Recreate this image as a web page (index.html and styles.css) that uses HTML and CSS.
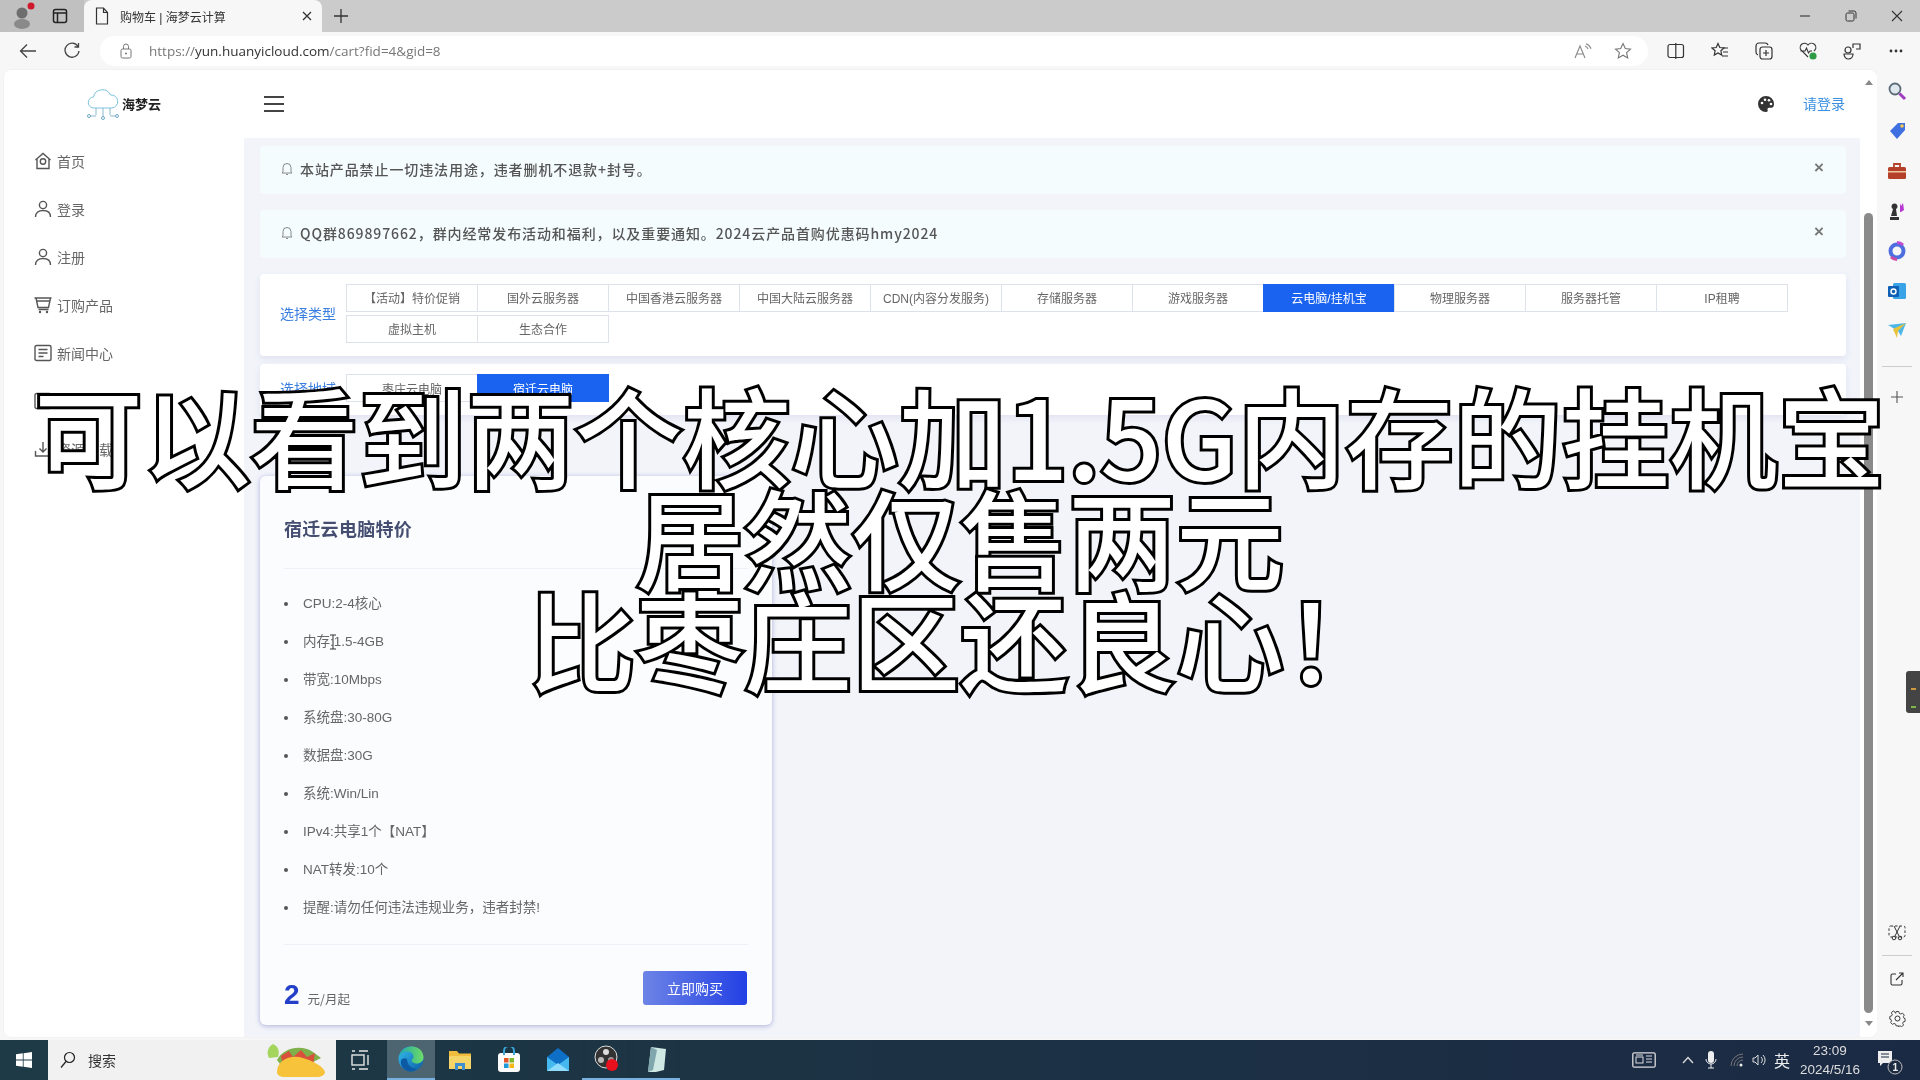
FILE: index.html
```html
<!DOCTYPE html>
<html lang="zh-CN">
<head>
<meta charset="utf-8">
<title>购物车 | 海梦云计算</title>
<link rel="stylesheet" href="styles.css">
</head>
<body>
<div class="screen">
  <div class="tabstrip">
    <div class="profile">
      <svg width="24" height="28" viewBox="0 0 24 28"><circle cx="10" cy="11" r="5.500" fill="#6e6e6e"/><ellipse cx="10" cy="22" rx="8" ry="5" fill="#8a8a8a"/><circle cx="19" cy="4" r="3.500" fill="#d0182c"/></svg>
    </div>
    <div class="tabactions">
      <svg class="ic" width="16" height="16" viewBox="0 0 16 16"><rect x="1.500" y="1.500" width="13" height="13" rx="2" stroke="#222" stroke-width="1.500"/><path d="M1.500 5h13M5.500 5v9" stroke="#222" stroke-width="1.500"/></svg>
    </div>
    <div class="tab">
      <svg class="ic" width="14" height="18" viewBox="0 0 14 18"><path d="M1.500 1h7l4 4.500V17h-11zM8.500 1v4.500h4" stroke="#333" stroke-width="1.200"/></svg>
      <span class="tabtitle">购物车 | 海梦云计算</span>
      <svg class="ic tabclose" width="10" height="10" viewBox="0 0 10 10"><path d="M1 1l8 8M9 1L1 9" stroke="#333" stroke-width="1.300"/></svg>
    </div>
    <svg class="ic newtab" width="16" height="16" viewBox="0 0 16 16"><path d="M8 1v14M1 8h14" stroke="#333" stroke-width="1.300"/></svg>
    <div class="winctl">
      <svg class="ic" width="12" height="12" viewBox="0 0 12 12"><path d="M1 6h10" stroke="#333" stroke-width="1.100"/></svg>
      <svg class="ic" width="12" height="12" viewBox="0 0 12 12"><rect x="1" y="3" width="8" height="8" rx="1.500" stroke="#333"/><path d="M3.500 1h5.500a2 2 0 0 1 2 2v5.500" stroke="#333"/></svg>
      <svg class="ic" width="12" height="12" viewBox="0 0 12 12"><path d="M1 1l10 10M11 1L1 11" stroke="#333" stroke-width="1.100"/></svg>
    </div>
  </div>

  <div class="toolbar">
    <div class="navbtn"><svg class="ic" width="18" height="16" viewBox="0 0 18 16"><path d="M17 8H1.500M8 1.500 1.500 8 8 14.500" stroke="#444" stroke-width="1.300"/></svg></div>
    <div class="navbtn"><svg class="ic" width="16" height="18" viewBox="0 0 16 18"><path d="M14 4.500A7 7 0 1 0 15 9M14.500 1v4h-4" stroke="#444" stroke-width="1.300"/></svg></div>
    <div class="addressbar">
      <svg class="ic lock" width="12" height="16" viewBox="0 0 12 16"><rect x="1" y="6" width="10" height="9" rx="1.500" stroke="#777"/><path d="M3.500 6V3.500a2.500 2.500 0 0 1 5 0V6" stroke="#777"/><circle cx="6" cy="10.500" r="1" fill="#777"/></svg>
      <span class="url">https://<b class="domain">yun.huanyicloud.com</b>/cart?fid=4&amp;gid=8</span>
      <svg class="ic addr-a" width="18" height="16" viewBox="0 0 18 16"><path d="M1 15 6 3l5 12M2.800 11h6.400M11 3a5 5 0 0 1 3 3M12 .8a8 8 0 0 1 5 5" stroke="#888" stroke-width="1.100"/></svg>
      <svg class="ic addr-star" width="18" height="18" viewBox="0 0 18 18"><path d="M9 1.500l2.300 5 5.200.6-3.900 3.500 1.100 5.300L9 13.200l-4.700 2.700 1.100-5.300L1.500 7.100l5.200-.6z" stroke="#777" stroke-width="1.100"/></svg>
    </div>
    <div class="tools">
      <svg class="ic" width="18" height="16" viewBox="0 0 18 16"><rect x="1" y="1.500" width="15.500" height="13" rx="2" stroke="#333" stroke-width="1.200"/><path d="M8.800 0v16" stroke="#333" stroke-width="1.200"/></svg>
      <svg class="ic" width="18" height="18" viewBox="0 0 18 18"><path d="M7 1.500 8.800 5.500l4.200.5-3.100 2.800.8 4.200L7 10.900l-3.700 2.100.8-4.200L1 6l4.200-.5z" stroke="#333" stroke-width="1.200"/><path d="M12 6h5M12 10h5M11 14h6" stroke="#333" stroke-width="1.200"/></svg>
      <svg class="ic" width="18" height="18" viewBox="0 0 18 18"><rect x="5" y="5" width="12" height="12" rx="2.500" stroke="#333" stroke-width="1.200"/><path d="M11 8v6M8 11h6M3 13a3 3 0 0 1-2-3V4a3 3 0 0 1 3-3h6a3 3 0 0 1 3 2" stroke="#333" stroke-width="1.200"/></svg>
      <svg class="ic" width="18" height="18" viewBox="0 0 18 18"><path d="M9 15 2 8a4 4 0 0 1 7-5 4 4 0 0 1 7 5l-1 1M1.500 9H6l1.500-3 2 5 1.500-2h2" stroke="#333" stroke-width="1.100"/><circle cx="14" cy="14" r="3.600" fill="#2e9b45"/></svg>
      <svg class="ic" width="18" height="18" viewBox="0 0 18 18"><circle cx="5" cy="8" r="3" stroke="#333" stroke-width="1.200"/><path d="M1 12h9c0 3-2 5-4.500 5S1 15 1 12zM10 6V2h7v5h-4" stroke="#333" stroke-width="1.200"/></svg>
      <svg class="ic" width="18" height="6" viewBox="0 0 18 6"><circle cx="4" cy="3" r="1.400" fill="#333"/><circle cx="9" cy="3" r="1.400" fill="#333"/><circle cx="14" cy="3" r="1.400" fill="#333"/></svg>
    </div>
  </div>

  <div class="viewport">
    <div class="page">
      <aside class="sidebar">
        <div class="logo">
          <svg class="ic" width="34" height="34" viewBox="0 0 34 34"><path d="M8 21a5.500 5.500 0 0 1-.5-11A9 9 0 0 1 24.500 8 6.500 6.500 0 0 1 26 21z" stroke="#7ec3dc" stroke-width="1"/><path d="M10 21v7M17 21v9M24 21v7M4 29h6M24 29h6" stroke="#6fa8c0" stroke-width=".8"/><circle cx="3" cy="29" r="1.500" stroke="#6fa8c0"/><circle cx="17" cy="31" r="1.500" stroke="#6fa8c0"/><circle cx="31" cy="29" r="1.500" stroke="#6fa8c0"/></svg>
          <span class="logotext">海梦云</span>
        </div>
        <nav class="menu">
          <a class="menuitem"><svg class="ic" width="18" height="18" viewBox="0 0 18 18"><path d="M1.500 8 9 1.500 16.500 8M3 6.500V16.500h12V6.500" stroke="#555" stroke-width="1.400"/><circle cx="9" cy="9.500" r="2.700" stroke="#555" stroke-width="1.400"/></svg>首页</a>
          <a class="menuitem"><svg class="ic" width="18" height="18" viewBox="0 0 18 18"><circle cx="9" cy="5" r="3.600" stroke="#555" stroke-width="1.400"/><path d="M1.500 17c0-4.500 3.200-6.500 7.500-6.500s7.500 2 7.500 6.500" stroke="#555" stroke-width="1.400"/></svg>登录</a>
          <a class="menuitem"><svg class="ic" width="18" height="18" viewBox="0 0 18 18"><circle cx="9" cy="5" r="3.600" stroke="#555" stroke-width="1.400"/><path d="M1.500 17c0-4.500 3.200-6.500 7.500-6.500s7.500 2 7.500 6.500" stroke="#555" stroke-width="1.400"/></svg>注册</a>
          <a class="menuitem"><svg class="ic" width="18" height="18" viewBox="0 0 18 18"><path d="M.5 2h17M2 2l2 9.500h10.500L16.500 2M3 5h12.500M4.500 13.500h10" stroke="#555" stroke-width="1.400"/><circle cx="6" cy="16" r="1.200" fill="#555"/><circle cx="13" cy="16" r="1.200" fill="#555"/></svg>订购产品</a>
          <a class="menuitem"><svg class="ic" width="18" height="18" viewBox="0 0 18 18"><rect x="1" y="1.500" width="16" height="15" rx="1.500" stroke="#555" stroke-width="1.400"/><path d="M4.500 5.500h9M4.500 9h9M4.500 12.500h5" stroke="#555" stroke-width="1.400"/></svg>新闻中心</a>
          <a class="menuitem"><svg class="ic" width="18" height="18" viewBox="0 0 18 18"><rect x="1" y="1.500" width="16" height="15" rx="1.500" stroke="#555" stroke-width="1.400"/></svg>帮助中心</a>
          <a class="menuitem"><svg class="ic" width="18" height="18" viewBox="0 0 18 18"><path d="M1.500 11v5h15v-5M9 2v10M5.500 8.500 9 12l3.500-3.500" stroke="#555" stroke-width="1.400"/></svg>资源下载</a>
        </nav>
      </aside>
      <div class="mainwrap">
        <header class="topbar">
          <svg class="ic burger" width="20" height="16" viewBox="0 0 20 16"><path d="M0 1h20M0 8h20M0 15h20" stroke="#444" stroke-width="2"/></svg>
          <svg class="palette" width="16" height="16" viewBox="0 0 16 16"><path d="M8 0a8 8 0 0 0 0 16c1.500 0 2-1 1.600-2-.5-1.100.2-2.200 1.400-2.200h2.500C15 11.800 16 10 16 8a8 8 0 0 0-8-8z" fill="#333"/><circle cx="4" cy="7" r="1.300" fill="#fff"/><circle cx="7" cy="3.800" r="1.300" fill="#fff"/><circle cx="11" cy="4.300" r="1.300" fill="#fff"/><circle cx="13" cy="8" r="1.300" fill="#fff"/></svg>
          <span class="loginlink">请登录</span>
        </header>
        <main class="content">
          <div class="alert">
            <svg class="ic bell" width="12" height="14" viewBox="0 0 12 14"><path d="M2 10V5.500a4 4 0 0 1 8 0V10l1 1H1zM5 12.500h2" stroke="#888" stroke-width="1"/></svg>
            <span class="alerttext">本站产品禁止一切违法用途，违者删机不退款+封号。</span>
            <span class="alertclose">×</span>
          </div>
          <div class="alert">
            <svg class="ic bell" width="12" height="14" viewBox="0 0 12 14"><path d="M2 10V5.500a4 4 0 0 1 8 0V10l1 1H1zM5 12.500h2" stroke="#888" stroke-width="1"/></svg>
            <span class="alerttext">QQ群869897662，群内经常发布活动和福利，以及重要通知。2024云产品首购优惠码hmy2024</span>
            <span class="alertclose">×</span>
          </div>
          <section class="filter filter-type">
            <span class="filterlabel">选择类型</span>
            <div class="tabgrid">
              <span class="opt">【活动】特价促销</span>
              <span class="opt">国外云服务器</span>
              <span class="opt">中国香港云服务器</span>
              <span class="opt">中国大陆云服务器</span>
              <span class="opt">CDN(内容分发服务)</span>
              <span class="opt">存储服务器</span>
              <span class="opt">游戏服务器</span>
              <span class="opt active">云电脑/挂机宝</span>
              <span class="opt">物理服务器</span>
              <span class="opt">服务器托管</span>
              <span class="opt">IP租聘</span>
              <span class="opt">虚拟主机</span>
              <span class="opt">生态合作</span>
            </div>
          </section>
          <section class="filter filter-region">
            <span class="filterlabel">选择地域</span>
            <div class="tabgrid">
              <span class="opt">枣庄云电脑</span>
              <span class="opt active">宿迁云电脑</span>
            </div>
          </section>
          <article class="product">
            <h2 class="ptitle">宿迁云电脑特价</h2>
            <ul class="specs">
              <li>CPU:2-4核心</li>
              <li>内存:1.5-4GB<svg class="ibeam" width="8" height="16" viewBox="0 0 8 16"><path d="M1 1h6M1 15h6M4 1v14" stroke="#333" stroke-width="1"/></svg></li>
              <li>带宽:10Mbps</li>
              <li>系统盘:30-80G</li>
              <li>数据盘:30G</li>
              <li>系统:Win/Lin</li>
              <li>IPv4:共享1个【NAT】</li>
              <li>NAT转发:10个</li>
              <li>提醒:请勿任何违法违规业务，违者封禁!</li>
            </ul>
            <div class="pfoot">
              <div class="price"><span class="pnum">2</span><span class="punit">元/月起</span></div>
              <span class="buy">立即购买</span>
            </div>
          </article>
        </main>
      </div>
      <div class="scrollbar">
        <span class="arrow-up"></span>
        <span class="thumb"></span>
        <span class="arrow-down"></span>
      </div>
    </div>
    <div class="edgebar">
      <svg class="ic" width="20" height="20" viewBox="0 0 20 20"><circle cx="8" cy="8" r="5.500" fill="#dfe7ef" stroke="#5b6b78" stroke-width="1.800"/><path d="M12.500 12.500 18 18" stroke="#a13cc0" stroke-width="3"/></svg>
      <svg class="ic" width="20" height="20" viewBox="0 0 20 20"><path d="M3 10 11 2h7v7l-8 9z" fill="#3f6fe0"/><circle cx="15" cy="5" r="1.800" fill="#f3c94b"/></svg>
      <svg class="ic" width="20" height="20" viewBox="0 0 20 20"><rect x="1" y="6" width="18" height="12" rx="1.500" fill="#b5402a"/><path d="M7 6V3h6v3" stroke="#b5402a" stroke-width="1.800"/><rect x="1" y="10" width="18" height="1.500" fill="#f0c9a0"/></svg>
      <svg class="ic" width="20" height="20" viewBox="0 0 20 20"><path d="M6 8a3 3 0 1 1 3 0l1 7H4zM3 16h9v3H3z" fill="#333"/><path d="M13 2l1 3 2-3 1 7-3 2h-1z" fill="#b43ad0"/></svg>
      <svg class="ic" width="20" height="20" viewBox="0 0 20 20"><circle cx="10" cy="10" r="6.500" stroke="#4f6fe0" stroke-width="4"/><path d="M10 1.500a8.500 8.500 0 0 1 6 2.500" stroke="#c04ad0" stroke-width="3"/><path d="M4 16a8.500 8.500 0 0 0 6 2.500" stroke="#d04aa0" stroke-width="3"/></svg>
      <svg class="ic" width="20" height="20" viewBox="0 0 20 20"><rect x="6" y="2" width="13" height="16" rx="1.500" fill="#3aa3e8"/><rect x="1" y="5" width="11" height="11" rx="1" fill="#0f5fb5"/><circle cx="6.500" cy="10.500" r="2.500" stroke="#fff" stroke-width="1.400"/></svg>
      <svg class="ic" width="20" height="20" viewBox="0 0 20 20"><path d="M1 4 19 2l-5 13-3-5z" fill="#4db8e8"/><path d="M6 8 19 2 11 10l-1 7z" fill="#e8c23a"/></svg>
      <span class="edgesep"></span>
      <svg class="ic" width="14" height="14" viewBox="0 0 14 14"><path d="M7 1v12M1 7h12" stroke="#555" stroke-width="1.100"/></svg>
      <span class="edgefill"></span>
      <svg class="ic" width="18" height="16" viewBox="0 0 18 16"><rect x="1" y="1" width="16" height="11" rx="1.500" stroke="#333" stroke-dasharray="2.500 2"/><path d="M6 1l5 10M12 1 7 11" stroke="#333"/><circle cx="6" cy="13" r="1.800" stroke="#333"/><circle cx="12" cy="13" r="1.800" stroke="#333"/></svg>
      <span class="edgesep edgesep-low"></span>
      <svg class="ic" width="14" height="14" viewBox="0 0 14 14"><path d="M6 2H2.500A1.500 1.500 0 0 0 1 3.500v8A1.500 1.500 0 0 0 2.500 13h8a1.500 1.500 0 0 0 1.500-1.500V8M6 8l7-7M9 1h4v4" stroke="#333" stroke-width="1.100"/></svg>
      <svg class="ic edgegear" width="17" height="17" viewBox="0 0 17 17"><path d="M7 1h3l.5 2 1.800.8 1.800-1 2 2.200-1 1.700.7 1.800 1.200.5v3l-2 .5-.7 1.800 1 1.700-2 2-1.800-1-1.800.7L10 17H7l-.5-2-1.800-.7-1.800 1-2-2 1-1.800-.7-1.800L0 9.500v-3l2-.5.700-1.800-1-1.700 2-2.200 1.800 1L6.500 3z" transform="translate(.8 .6) scale(.9)" stroke="#333"/><circle cx="8.500" cy="8.500" r="2.500" stroke="#333"/></svg>
    </div>
  </div>

  <footer class="taskbar">
    <div class="startbtn"><svg width="16" height="16" viewBox="0 0 16 16"><path d="M0 2.300 6.800 1.300V7.500H0zM7.600 1.200 16 0V7.500H7.600zM0 8.400H6.800V14.700L0 13.700zM7.600 8.400H16V16L7.600 14.800z" fill="#fff"/></svg></div>
    <div class="searchbox">
      <svg class="ic" width="16" height="18" viewBox="0 0 16 18"><circle cx="9.500" cy="6.500" r="5" stroke="#222" stroke-width="1.200"/><path d="M6 10.500 1 16.500" stroke="#222" stroke-width="1.200"/></svg>
      <span class="searchtext">搜索</span>
      <svg class="taco" width="62" height="36" viewBox="0 0 62 36"><path d="M8 2c5 2 7 7 5 13l-9 1C1 10 3 5 8 2z" fill="#a4d65e"/><path d="M12 18c6-12 24-16 36-8l8 6-12 6-26 4z" fill="#7fb04a"/><path d="M16 14l8-5 4 6 8-7 6 7 8-4-2 12H18z" fill="#d9503c"/><path d="M12 30c0-12 14-18 26-14 10 3 20 8 22 14 0 3-4 5-8 5H20c-5 0-8-2-8-5z" fill="#f6c33a"/></svg>
    </div>
    <div class="taskicon taskview"><svg class="ic" width="18" height="20" viewBox="0 0 18 20"><path d="M1 1h3M8 1h9M1 19h3M8 19h9" stroke="#e6e6e6" stroke-width="1.400"/><rect x="1" y="5" width="12" height="10" stroke="#e6e6e6" stroke-width="1.400"/><path d="M17 5v10" stroke="#e6e6e6" stroke-width="1.400"/></svg></div>
    <div class="taskicon running"><svg width="26" height="26" viewBox="0 0 26 26"><defs><linearGradient id="eg1" x1="0" y1="0" x2="1" y2="1"><stop offset="0" stop-color="#35c1f1"/><stop offset="1" stop-color="#0c59a4"/></linearGradient><linearGradient id="eg2" x1="0" y1="0" x2="1" y2="0"><stop offset="0" stop-color="#1fa6a0"/><stop offset="1" stop-color="#6fdc6a"/></linearGradient></defs><circle cx="13" cy="13" r="12.500" fill="url(#eg1)"/><path d="M1 11C3 3 10 .5 14 .5c7 0 11.500 5 11.500 11 0 4-4 6-7 6-3 0-5-1.500-5-3 0-1 2-1.500 2-4 0-3-3-5-6-5-4 0-7 2-8.500 5.500z" fill="url(#eg2)"/><path d="M9 13c0 6 5 10 10 10-2 1.500-4 2.500-6 2.500-7 0-11-6-10-11 1-2 4-3 6-1.500z" fill="#0c59a4"/></svg></div>
    <div class="taskicon"><svg width="22" height="22" viewBox="0 0 22 22"><path d="M0 2h8l2 2.500h12V20H0z" fill="#f0bd3c"/><rect x="0" y="7" width="22" height="13" fill="#f6d568"/><path d="M6 21v-7h10v7h-3v-4H9v4z" fill="#3d8fd0"/></svg></div>
    <div class="taskicon"><svg width="22" height="26" viewBox="0 0 22 26"><rect x="0" y="6" width="22" height="19" rx="3" fill="#fbfbfb"/><path d="M6 8V4a5 5 0 0 1 10 0v4" stroke="#39a7d8" stroke-width="2" fill="none"/><rect x="6" y="11" width="4.500" height="4.500" fill="#e2552a"/><rect x="11.500" y="11" width="4.500" height="4.500" fill="#7fb82e"/><rect x="6" y="16.500" width="4.500" height="4.500" fill="#1e9ad8"/><rect x="11.500" y="16.500" width="4.500" height="4.500" fill="#f6b818"/></svg></div>
    <div class="taskicon"><svg width="24" height="24" viewBox="0 0 24 24"><path d="M1 9 12 0l11 9v14H1z" fill="#0e6fc6"/><path d="M1 9l11 8 11-8v14H1z" fill="#45b8f0"/><path d="M1 23l11-8 11 8z" fill="#8fdcff"/></svg></div>
    <div class="taskicon pinned"><svg width="26" height="28" viewBox="0 0 26 28"><circle cx="12" cy="12" r="11" fill="#333" stroke="#ddd"/><circle cx="12" cy="7" r="3" fill="#ddd"/><circle cx="7" cy="15" r="3" fill="#bbb"/><circle cx="17" cy="15" r="3" fill="#999"/><circle cx="18" cy="20" r="6" fill="#e8101c"/></svg></div>
    <div class="taskicon pinned"><svg width="22" height="28" viewBox="0 0 22 28"><path d="M6 2l15 2-2 21-8 2H3z" fill="#cfe8e4"/><path d="M6 2l-3 25 5-2 4-20z" fill="#7fa5ad"/></svg></div>
    <div class="tray">
      <svg class="ic" width="24" height="16" viewBox="0 0 24 16"><rect x=".8" y=".8" width="22.400" height="14.400" rx="1.500" stroke="#ddd" stroke-width="1.300"/><rect x="4" y="5" width="7" height="6" stroke="#ddd"/><path d="M14 4h6M14 7h6M14 10h6M4 3h7" stroke="#ddd"/></svg>
      <svg class="ic tray-caret" width="12" height="8" viewBox="0 0 12 8"><path d="M1 7l5-5.500L11 7" stroke="#ddd" stroke-width="1.300"/></svg>
      <svg class="ic tray-mic" width="12" height="18" viewBox="0 0 12 18"><rect x="3" y="0" width="6" height="12" rx="3" fill="#eee"/><path d="M1 8a5 5 0 0 0 10 0M6 13v4M3 17h6" stroke="#eee"/></svg>
      <svg class="ic tray-wifi" width="14" height="14" viewBox="0 0 14 14"><path d="M1 13A12 12 0 0 1 13 1M4 13a9 9 0 0 1 9-9M7 13a6 6 0 0 1 6-6" stroke="#777"/><circle cx="11" cy="12" r="1.500" fill="#eee"/></svg>
      <svg class="ic tray-vol" width="16" height="14" viewBox="0 0 16 14"><path d="M1 5h2l3-3v10L3 9H1zM9 4a4 4 0 0 1 0 6M11 2a7 7 0 0 1 0 10" stroke="#ddd"/></svg>
      <span class="ime">英</span>
      <div class="clock"><span>23:09</span><span>2024/5/16</span></div>
      <svg class="notif" width="26" height="30" viewBox="0 0 26 30"><path d="M1 6h14v12H6l-3 3v-3H1z" fill="#eee"/><path d="M4 9h8M4 12h8" stroke="#1c2a42"/><circle cx="18" cy="22" r="7" fill="#1c2a42" stroke="#bbb"/></svg>
      <span class="notifnum">1</span>
    </div>
  </footer>

  <div class="handle"><i class="tick tick-o"></i><i class="tick tick-g"></i></div>

  <div class="caption">
    <div>可以看到两个核心加1.5G内存的挂机宝</div>
    <div>居然仅售两元</div>
    <div>比枣庄区还良心！</div>
  </div>
</div>
</body>
</html>
```

FILE: styles.css
```css
* { box-sizing: border-box; }
html, body { margin: 0; padding: 0; }
body { font-family: "Liberation Sans", "Noto Sans CJK SC", sans-serif; font-size: 14px; color: #666; }
.ic { fill: none; flex: none; display: block; }
.screen { position: relative; width: 1920px; height: 1080px; overflow: hidden; display: flex; flex-direction: column; background: #f7f7f7; }
.tabstrip, .toolbar, .viewport, .taskbar { filter: blur(.35px); }

/* tab strip */
.tabstrip { height: 32px; flex: none; display: flex; align-items: center; background: #cbcbcb; }
.profile { width: 42px; height: 32px; display: flex; align-items: center; justify-content: center; padding-left: 6px; background: #c0c0c0; }
.tabactions { width: 42px; height: 32px; display: flex; align-items: center; justify-content: center; padding-right: 6px; background: #c0c0c0; }
.tab { width: 238px; height: 32px; display: flex; align-items: center; padding: 0 10px 0 11px; background: #f7f7f7; border-radius: 8px 8px 0 0; }
.tabtitle { margin-left: 11px; font-size: 12px; color: #333; flex: 1; }
.newtab { margin-left: 11px; }
.winctl { margin-left: auto; display: flex; gap: 34px; padding-right: 17px; }

/* toolbar */
.toolbar { height: 38px; flex: none; display: flex; align-items: center; background: #f7f7f7; padding-left: 6px; }
.navbtn { width: 44px; display: flex; justify-content: center; }
.addressbar { width: 1548px; height: 30px; margin-left: 6px; display: flex; align-items: center; background: #fff; border-radius: 15px; padding: 0 16px 0 20px; }
.url { margin-left: 17px; font-family: "Open Sans", sans-serif; font-size: 13.500px; color: #777; }
.domain { font-weight: 400; color: #333; }
.addr-a { margin-left: auto; }
.addr-star { margin-left: 22px; }
.tools { display: flex; align-items: center; gap: 26px; margin-left: 19px; }

/* browser viewport */
.viewport { flex: 1; min-height: 0; display: flex; padding-bottom: 3px; }
.page { margin-left: 4px; width: 1873px; display: flex; background: #fff; border-radius: 8px; overflow: hidden; box-shadow: 0 0 2px rgba(0,0,0,.08); }
.sidebar { width: 240px; flex: none; background: #fff; }
.logo { height: 67px; display: flex; align-items: center; padding-left: 82px; gap: 2px; }
.logotext { font-family: "Noto Sans CJK SC", sans-serif; font-size: 13px; font-weight: 700; color: #222; }
.menu { display: flex; flex-direction: column; }
.menuitem { height: 48px; display: flex; align-items: center; gap: 5px; padding-left: 30px; font-family: "Noto Sans CJK SC", sans-serif; font-size: 14px; color: #666; }
.mainwrap { flex: 1; min-width: 0; display: flex; flex-direction: column; }
.topbar { height: 68px; flex: none; display: flex; align-items: center; padding: 0 15px 0 20px; background: #fff; }
.palette { margin-left: auto; }
.loginlink { margin-left: 29px; margin-top: -2px; font-family: "Noto Sans CJK SC", sans-serif; font-size: 14px; color: #3b8fe0; }

/* content */
.content { flex: 1; min-height: 0; overflow: hidden; background: #f2f4fa; padding: 8px 14px 0 16px; display: flex; flex-direction: column; align-items: stretch; }
.alert { height: 48px; flex: none; display: flex; align-items: center; padding: 0 22px 2px 21px; margin-bottom: 16px; background: #f4fcfd; border-radius: 4px; }
.alerttext { margin-left: 7px; font-family: "Noto Sans CJK SC", sans-serif; font-size: 14px; font-weight: 500; letter-spacing: .9px; color: #555; }
.alertclose { margin-left: auto; font-size: 17px; font-weight: 700; color: #777; margin-top: -3px; }
.filter { flex: none; display: flex; align-items: center; background: #fff; border-radius: 4px; box-shadow: 0 3px 6px rgba(100,110,180,.12); }
.filter-type { height: 82px; margin-bottom: 8px; padding: 8px 0 12px 20px; }
.filter-region { height: 51px; margin-bottom: 61px; align-items: flex-start; padding: 10px 0 0 20px; }
.filterlabel { width: 66px; flex: none; font-family: "Noto Sans CJK SC", sans-serif; font-size: 14px; color: #3a7fe0; }
.filter-region .filterlabel { margin-top: 4px; }
.tabgrid { display: grid; grid-template-columns: repeat(11, 131px); grid-auto-rows: 28px; row-gap: 3px; }
.opt { display: flex; align-items: center; justify-content: center; margin-right: -1px; background: #fff; border: 1px solid #dde1ea; font-size: 12px; color: #666; }
.opt.active { background: #1a63f0; border-color: #1a63f0; color: #fff; }

/* product */
.product { width: 512px; height: 549px; flex: none; background: #fafcfd; border-radius: 6px; padding: 39px 24px 0; box-shadow: 0 1px 5px rgba(70,70,170,.4); }
.ptitle { margin: 0; height: 53px; border-bottom: 1px solid #eef0f7; font-family: "Noto Sans CJK SC", sans-serif; font-size: 18px; line-height: 26px; font-weight: 700; letter-spacing: .3px; color: #454e70; box-sizing: content-box; }
.specs { margin: 16px 0 17px; padding: 0 0 0 19px; list-style: none; height: 342px; }
.specs li { position: relative; height: 38px; line-height: 38px; font-size: 13.500px; color: #666; }
.specs li::before { content: ""; position: absolute; left: -19px; top: 17px; width: 4px; height: 4px; border-radius: 50%; background: #555; }
.ibeam { position: absolute; left: 26px; top: 11px; }
.pfoot { display: flex; align-items: flex-start; justify-content: space-between; border-top: 1px solid #eef0f7; padding: 26px 1px 0 0; }
.price { display: flex; align-items: baseline; gap: 8px; margin-top: 8px; }
.pnum { font-size: 28px; line-height: 32px; font-weight: 700; color: #2440c8; }
.punit { font-family: "Noto Sans CJK SC", sans-serif; font-size: 12.500px; color: #666; }
.buy { width: 104px; height: 34px; display: flex; align-items: center; justify-content: center; border-radius: 3px; background: linear-gradient(90deg, #6d84e6, #2340e4); color: #fff; font-family: "Noto Sans CJK SC", sans-serif; font-size: 14px; }

/* scrollbar */
.scrollbar { width: 17px; flex: none; display: flex; flex-direction: column; align-items: center; padding-top: 10px; background: #fff; }
.arrow-up { width: 0; height: 0; border: 4.500px solid transparent; border-top: 0; border-bottom: 5px solid #888; flex: none; }
.thumb { width: 9px; height: 800px; margin-top: 128px; background: #8a8a8a; border-radius: 5px; flex: none; }
.arrow-down { width: 0; height: 0; margin-top: 8px; border: 4.500px solid transparent; border-bottom: 0; border-top: 5px solid #888; flex: none; }

/* edge side bar */
.edgebar { width: 43px; flex: none; display: flex; flex-direction: column; align-items: center; padding: 11px 3px 10px 0; gap: 20px; background: #f7f7f7; }
.edgesep { width: 30px; height: 1px; flex: none; background: #ccc; margin: 5px 0 3px; }
.edgesep-low { margin: -6px 0 -4px; }
.edgefill { flex: 1; }
.edgegear { margin-top: 4px; }

/* taskbar */
.taskbar { height: 40px; flex: none; display: flex; align-items: center; background: linear-gradient(90deg, #1d3a46, #1c3344 40%, #1b2a44); color: #eee; }
.startbtn { width: 48px; height: 40px; display: flex; align-items: center; justify-content: center; }
.searchbox { width: 288px; height: 40px; display: flex; align-items: center; padding-left: 12px; background: #f1f1f1; }
.searchtext { margin-left: 12px; font-family: "Noto Sans CJK SC", sans-serif; font-size: 14px; color: #333; }
.taco { margin-left: auto; margin-right: 9px; }
.taskicon { width: 49px; height: 40px; display: flex; align-items: center; justify-content: center; }
.taskview { width: 51px; padding-right: 4px; }
.running { width: 48px; background: #4c6570; border-bottom: 2px solid #78b0e0; }
.pinned { border-bottom: 2px solid #78b0e0; box-shadow: inset 4px 0 #1c3344, inset -4px 0 #1c3344; }
.tray { margin-left: auto; display: flex; align-items: center; position: relative; padding-right: 17px; }
.tray-caret { margin-left: 26px; }
.tray-mic { margin-left: 11px; }
.tray-wifi { margin-left: 13px; }
.tray-vol { margin-left: 8px; }
.ime { margin-left: 6px; font-family: "Noto Sans CJK SC", sans-serif; font-size: 16px; color: #eee; }
.clock { width: 64px; margin-left: 8px; display: flex; flex-direction: column; align-items: center; font-size: 13.500px; line-height: 19px; color: #ddd; }
.notif { margin-left: 15px; }
.notifnum { position: absolute; right: 22px; top: 21px; font-size: 10px; font-weight: 700; color: #eee; }

/* floating handle */
.handle { position: absolute; right: 0; top: 671px; width: 14px; height: 42px; background: #444; border-radius: 3px 0 0 3px; }
.tick { position: absolute; left: 5px; width: 5px; height: 2px; }
.tick-o { top: 17px; background: #d09a40; }
.tick-g { top: 35px; background: #7ab648; }

/* video caption */
.caption { position: absolute; left: 0; right: 0; top: 382px; text-align: center; font-family: "Noto Sans CJK SC", sans-serif; font-size: 108px; line-height: 102px; font-weight: 500; color: #fff; -webkit-text-stroke: 6px #000; paint-order: stroke fill; white-space: nowrap; }
```
